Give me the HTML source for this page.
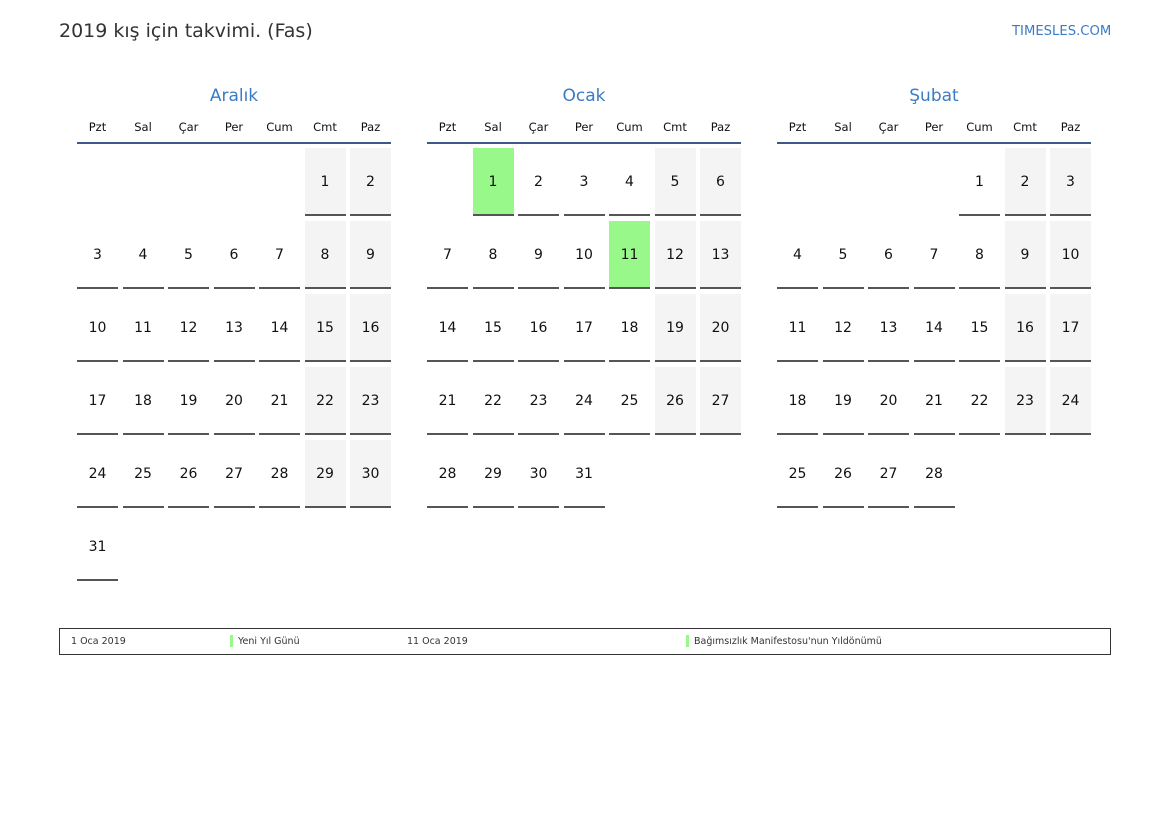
<!DOCTYPE html>
<html><head><meta charset="utf-8">
<style>
*{margin:0;padding:0;box-sizing:border-box}
body{width:1169px;height:827px;background:#fff;font-family:"DejaVu Sans","Liberation Sans",sans-serif;position:relative;overflow:hidden;color:#111}
.title{position:absolute;left:59px;top:20px;font-size:19px;color:#333;white-space:nowrap}
.site{position:absolute;left:1012px;top:24px;font-size:13.2px;color:#3a7cc4}
.m{position:absolute;top:84px;width:314px}
.mt{text-align:center;font-size:17px;color:#3a7cc4;height:24px;line-height:24px}
.dh{display:grid;grid-template-columns:repeat(7,41px);column-gap:4.5px;height:36px;border-bottom:2px solid #3b5a85;font-size:11.5px}
.dh div{text-align:center;line-height:38px}
.g{display:grid;grid-template-columns:repeat(7,41px);column-gap:4.5px;row-gap:5px;grid-auto-rows:68px;margin-top:4px}
.g div{text-align:center;line-height:68px;font-size:14px;border-bottom:2px solid #555}
.g .w{background:#f4f4f4}
.g .h{background:#98f98a}
.g .e{border:none}
.leg{position:absolute;left:59px;top:628px;width:1052px;height:27px;border:1.5px solid #333;font-size:9.5px;color:#333}
.leg span{position:absolute;top:7px;white-space:nowrap}
.bar{position:absolute;top:6px;width:3px;height:12px;background:#98f98a}
</style></head><body>
<div class="title">2019 kış için takvimi. (Fas)</div>
<div class="site">TIMESLES.COM</div>

<div class="m" style="left:77px">
<div class="mt">Aralık</div>
<div class="dh"><div>Pzt</div><div>Sal</div><div>Çar</div><div>Per</div><div>Cum</div><div>Cmt</div><div>Paz</div></div>
<div class="g">
<div class="e"></div><div class="e"></div><div class="e"></div><div class="e"></div><div class="e"></div><div class="w">1</div><div class="w">2</div>
<div>3</div><div>4</div><div>5</div><div>6</div><div>7</div><div class="w">8</div><div class="w">9</div>
<div>10</div><div>11</div><div>12</div><div>13</div><div>14</div><div class="w">15</div><div class="w">16</div>
<div>17</div><div>18</div><div>19</div><div>20</div><div>21</div><div class="w">22</div><div class="w">23</div>
<div>24</div><div>25</div><div>26</div><div>27</div><div>28</div><div class="w">29</div><div class="w">30</div>
<div>31</div>
</div></div>

<div class="m" style="left:427px">
<div class="mt">Ocak</div>
<div class="dh"><div>Pzt</div><div>Sal</div><div>Çar</div><div>Per</div><div>Cum</div><div>Cmt</div><div>Paz</div></div>
<div class="g">
<div class="e"></div><div class="h">1</div><div>2</div><div>3</div><div>4</div><div class="w">5</div><div class="w">6</div>
<div>7</div><div>8</div><div>9</div><div>10</div><div class="h">11</div><div class="w">12</div><div class="w">13</div>
<div>14</div><div>15</div><div>16</div><div>17</div><div>18</div><div class="w">19</div><div class="w">20</div>
<div>21</div><div>22</div><div>23</div><div>24</div><div>25</div><div class="w">26</div><div class="w">27</div>
<div>28</div><div>29</div><div>30</div><div>31</div>
</div></div>

<div class="m" style="left:777px">
<div class="mt">Şubat</div>
<div class="dh"><div>Pzt</div><div>Sal</div><div>Çar</div><div>Per</div><div>Cum</div><div>Cmt</div><div>Paz</div></div>
<div class="g">
<div class="e"></div><div class="e"></div><div class="e"></div><div class="e"></div><div>1</div><div class="w">2</div><div class="w">3</div>
<div>4</div><div>5</div><div>6</div><div>7</div><div>8</div><div class="w">9</div><div class="w">10</div>
<div>11</div><div>12</div><div>13</div><div>14</div><div>15</div><div class="w">16</div><div class="w">17</div>
<div>18</div><div>19</div><div>20</div><div>21</div><div>22</div><div class="w">23</div><div class="w">24</div>
<div>25</div><div>26</div><div>27</div><div>28</div>
</div></div>

<div class="leg">
<span style="left:11px">1 Oca 2019</span>
<div class="bar" style="left:170px"></div><span style="left:178px">Yeni Yıl Günü</span>
<span style="left:347px">11 Oca 2019</span>
<div class="bar" style="left:626px"></div><span style="left:634px">Bağımsızlık Manifestosu'nun Yıldönümü</span>
</div>
</body></html>
